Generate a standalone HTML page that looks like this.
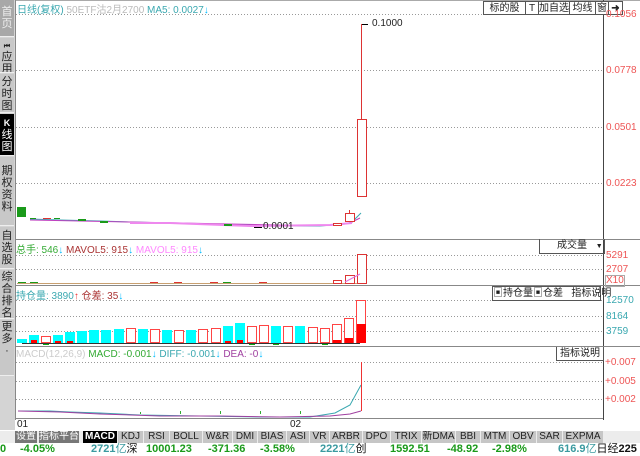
<!DOCTYPE html><html><head><meta charset="utf-8"><style>
*{margin:0;padding:0}body{width:640px;height:456px;overflow:hidden;background:#fff;font-family:"Liberation Sans","Noto Sans CJK SC",sans-serif;font-size:11px;position:relative}
.a{position:absolute;white-space:nowrap}
.side{position:absolute;left:0;top:0;width:15px;height:430px;background:#d4d4d4}
.tab{position:absolute;left:0;width:14px;background:#c8c8c8;color:#222;font-size:11px;line-height:12px;text-align:center;border-bottom:1px solid #eee;padding-top:3px;box-sizing:border-box;overflow:hidden}
.btn{position:absolute;top:1px;height:14px;border:1px solid #555;background:#fff;font-size:10px;line-height:13px;text-align:center;color:#222;white-space:nowrap;overflow:hidden;box-sizing:border-box}
.tabs{position:absolute;top:431px;left:0;height:12px;width:640px;background:#ececec}
.tb{position:absolute;top:0;height:12px;background:#c6c6c6;font-size:10px;line-height:12px;color:#222;text-align:center;white-space:nowrap;overflow:hidden}
.st{position:absolute;top:443px;font-size:11px;line-height:13px;font-weight:bold;color:#1a9a1a;white-space:nowrap}
</style></head><body>
<div class="side">
<div class="tab" style="top:0;height:37px;background:#a8a8a8;color:#eee;padding-top:6px">首<br>页</div>
<div class="tab" style="top:38px;height:35px;padding-top:1px"><b style="font-size:7px;line-height:8px">⏮</b><br>应<br>用</div>
<div class="tab" style="top:74px;height:39px;padding-top:2px">分<br>时<br>图</div>
<div class="tab" style="top:114px;height:42px;background:#000;color:#fff;padding-top:3px"><b style="font-size:9px">K</b><br>线<br>图</div>
<div class="tab" style="top:157px;height:69px;padding-top:8px">期<br>权<br>资<br>料</div>
<div class="tab" style="top:227px;height:42px;padding-top:3px">自<br>选<br>股</div>
<div class="tab" style="top:270px;height:49px;padding-top:1px">综<br>合<br>排<br>名</div>
<div class="tab" style="top:320px;height:56px;padding-top:1px">更<br>多<br>·</div>
</div>
<svg class="a" style="left:0;top:0" width="640" height="431">
<g stroke="#999" stroke-width="1" stroke-dasharray="1,2">
<line x1="16" x2="603" y1="14.5" y2="14.5"/><line x1="16" x2="603" y1="70.5" y2="70.5"/><line x1="16" x2="603" y1="127.5" y2="127.5"/><line x1="16" x2="603" y1="183.5" y2="183.5"/>
<line x1="16" x2="603" y1="255.5" y2="255.5"/><line x1="16" x2="603" y1="269.5" y2="269.5"/>
<line x1="16" x2="603" y1="300.5" y2="300.5"/><line x1="16" x2="603" y1="316.5" y2="316.5"/><line x1="16" x2="603" y1="331.5" y2="331.5"/>
<line x1="16" x2="603" y1="362.5" y2="362.5"/><line x1="16" x2="603" y1="381.5" y2="381.5"/><line x1="16" x2="603" y1="399.5" y2="399.5"/>
</g>
<g stroke="#888" fill="none">
<line x1="15" x2="640" y1="0.5" y2="0.5" stroke="#aaa"/>
<line x1="15.5" x2="15.5" y1="0" y2="420"/><line x1="603.5" x2="603.5" y1="0" y2="420" stroke="#444"/>
<line x1="16" x2="640" y1="239.5" y2="239.5"/><line x1="16" x2="640" y1="285.5" y2="285.5"/><line x1="16" x2="640" y1="346.5" y2="346.5"/><line x1="16" x2="603" y1="418.5" y2="418.5"/>
</g>
<rect x="17" y="207" width="9" height="10" fill="#1a9a1a"/>
<g stroke-width="1">
<polyline points="30,219 60,220 100,221 130,222 170,223 210,224 250,225 280,226 320,226 345,224 352,222 361,213" stroke="#3aa8b0" fill="none"/>
<polyline points="30,220 80,221 130,222 180,223 230,224 280,225 330,225 350,223 360,218" stroke="#c040c0" fill="none"/>
<polyline points="130,223 170,223 250,226 330,225 352,223" stroke="#ee88ee" fill="none" stroke-width="2"/>
</g>
<g fill="#1a9a1a"><rect x="30" y="218" width="6" height="1"/><rect x="54" y="218" width="6" height="1"/><rect x="78" y="219" width="8" height="2"/><rect x="100" y="221" width="8" height="2"/><rect x="224" y="224" width="8" height="2"/></g>
<rect x="43" y="218" width="8" height="1" fill="#d33"/>
<line x1="361.5" y1="24" x2="361.5" y2="120" stroke="#d33"/>
<rect x="357.5" y="119.5" width="9" height="77" fill="#fff" stroke="#d33"/>
<rect x="345.5" y="213.5" width="9" height="8" fill="#fff" stroke="#d33"/>
<line x1="349.5" y1="210" x2="349.5" y2="214" stroke="#d33"/>
<rect x="333.5" y="223.5" width="8" height="2" fill="#fff" stroke="#d33"/>
<line x1="362" y1="24.5" x2="368" y2="24.5" stroke="#000"/><line x1="254" y1="227.5" x2="262" y2="227.5" stroke="#000"/>
<g fill="#1a9a1a"><rect x="18" y="282" width="8" height="2"/><rect x="30" y="282" width="8" height="2"/><rect x="54" y="283" width="8" height="1"/><rect x="66" y="283" width="8" height="1"/><rect x="150" y="283" width="8" height="1"/><rect x="162" y="283" width="8" height="1"/><rect x="223" y="282" width="8" height="2"/><rect x="271" y="283" width="8" height="1"/></g>
<g fill="#d33"><rect x="42" y="283" width="8" height="1"/><rect x="150" y="282" width="8" height="2"/><rect x="174" y="282" width="8" height="2"/><rect x="210" y="282" width="8" height="2"/><rect x="259" y="282" width="8" height="2"/><rect x="283" y="283" width="8" height="1"/></g>
<line x1="17" x2="357" y1="283.5" y2="283.5" stroke="#c8a070"/>
<rect x="333.5" y="280.5" width="8" height="3" fill="#fff" stroke="#d33"/>
<rect x="345.5" y="275.5" width="9" height="8" fill="#fff" stroke="#d33"/>
<rect x="357.5" y="254.5" width="9" height="29" fill="#fff" stroke="#d33"/>
<polyline points="345,282 360,274" stroke="#e070e0" fill="none"/>
<g fill="#00ffff">
<rect x="17" y="339" width="10" height="4"/><rect x="29" y="335" width="10" height="8"/><rect x="53" y="335" width="10" height="8"/><rect x="65" y="332" width="10" height="11"/><rect x="77" y="331" width="10" height="12"/><rect x="89" y="330" width="10" height="13"/><rect x="101" y="330" width="10" height="13"/><rect x="114" y="329" width="10" height="14"/><rect x="138" y="329" width="10" height="14"/><rect x="162" y="330" width="10" height="13"/><rect x="186" y="330" width="10" height="13"/><rect x="223" y="326" width="10" height="17"/><rect x="235" y="323" width="10" height="20"/><rect x="271" y="326" width="10" height="17"/><rect x="295" y="326" width="10" height="17"/>
</g>
<g fill="#fff" stroke="#f44">
<rect x="41.5" y="336.5" width="9" height="6"/><rect x="126.5" y="328.5" width="9" height="14"/><rect x="150.5" y="329.5" width="9" height="13"/><rect x="174.5" y="330.5" width="9" height="12"/><rect x="198.5" y="329.5" width="9" height="13"/><rect x="211.5" y="328.5" width="9" height="14"/><rect x="247.5" y="326.5" width="9" height="16"/><rect x="259.5" y="325.5" width="9" height="17"/><rect x="283.5" y="326.5" width="9" height="16"/><rect x="308.5" y="327.5" width="9" height="15"/><rect x="320.5" y="328.5" width="9" height="14"/><rect x="332.5" y="324.5" width="9" height="18"/><rect x="344.5" y="318.5" width="9" height="24"/><rect x="356.5" y="300.5" width="9" height="42"/>
</g>
<g fill="#f00"><rect x="31" y="340" width="6" height="3"/><rect x="55" y="341" width="6" height="2"/><rect x="67" y="341" width="6" height="2"/><rect x="225" y="341" width="6" height="2"/><rect x="237" y="340" width="6" height="3"/><rect x="333" y="340" width="8" height="3"/><rect x="345" y="338" width="8" height="5"/><rect x="357" y="324" width="9" height="19"/></g>
<g fill="#1a1"><rect x="43" y="343" width="6" height="2"/><rect x="249" y="343" width="6" height="2"/><rect x="273" y="343" width="6" height="2"/><rect x="322" y="343" width="6" height="2"/></g>
<line x1="22" x2="360" y1="343.5" y2="343.5" stroke="#333"/>
<polyline points="18,411 50,411 70,412 100,413 140,415 200,416 260,417 310,417 335,413 350,405 361,385" stroke="#3aa8b0" fill="none"/>
<polyline points="18,411 60,412 100,414 160,416 220,416 280,417 330,416 350,414 361,411" stroke="#a040a0" fill="none"/>
<line x1="361.5" y1="362" x2="361.5" y2="411" stroke="#e33"/>
<g stroke="#3a3" stroke-width="1"><line x1="140.5" y1="412" x2="140.5" y2="414"/><line x1="180.5" y1="411" x2="180.5" y2="414"/><line x1="220.5" y1="411" x2="220.5" y2="414"/><line x1="260.5" y1="411" x2="260.5" y2="414"/><line x1="300.5" y1="411" x2="300.5" y2="414"/></g>
</svg>
<div class="a" style="left:17px;top:1px;font-size:10px;color:#3aa8b0">日线(复权) <span style="color:#bbb">50ETF沽2月2700</span> MA5: 0.0027<span style="color:#0bf">↓</span></div>
<div class="btn" style="left:483px;width:43px">标的股</div>
<div class="btn" style="left:525px;width:14px">T</div>
<div class="btn" style="left:538px;width:32px">加自选</div>
<div class="btn" style="left:569px;width:27px">均线</div>
<div class="btn" style="left:595px;width:14px">窗</div>
<div class="btn" style="left:608px;width:15px;font-weight:bold">➜</div>
<div class="a" style="left:372px;top:18px;font-size:10px;color:#222">0.1000</div>
<div class="a" style="left:263px;top:221px;font-size:10px;color:#222">0.0001</div>
<div class="a" style="left:606px;top:9px;font-size:10px;color:#e55">0.1056</div>
<div class="a" style="left:606px;top:65px;font-size:10px;color:#e55">0.0778</div>
<div class="a" style="left:606px;top:122px;font-size:10px;color:#e55">0.0501</div>
<div class="a" style="left:606px;top:178px;font-size:10px;color:#e55">0.0223</div>
<div class="a" style="left:16px;top:241px;font-size:10px;color:#3a3">总手: 546<span style="color:#0bf">↓</span> <span style="color:#a33">MAVOL5: 915</span><span style="color:#0bf">↓</span> <span style="color:#f8f">MAVOL5: 915</span><span style="color:#0bf">↓</span></div>
<div class="a" style="left:539px;top:239px;width:64px;height:14px;border:1px solid #555;border-top:0;font-size:10px;line-height:14px;color:#222;text-indent:17px">成交量 <span style="font-size:7px;margin-left:6px">▼</span></div>
<div class="a" style="left:606px;top:250px;font-size:10px;color:#e55">5291</div>
<div class="a" style="left:606px;top:264px;font-size:10px;color:#e55">2707</div>
<div class="a" style="left:605px;top:275px;font-size:10px;color:#e55;border:1px solid #aaa;line-height:10px">X10</div>
<div class="a" style="left:16px;top:287px;font-size:10px;color:#3aa8b0">持仓量: 3890<span style="color:#e33">↑</span> <span style="color:#a33">仓差: 35</span><span style="color:#0bf">↓</span></div>
<div class="a" style="left:492px;top:286px;width:107px;height:13px;border:1px solid #555;font-size:10px;line-height:13px;color:#222">▣持仓量▣仓差&nbsp;&nbsp;&nbsp;指标说明</div>
<div class="a" style="left:606px;top:295px;font-size:10px;color:#3aa8b0">12570</div>
<div class="a" style="left:606px;top:311px;font-size:10px;color:#3aa8b0">8164</div>
<div class="a" style="left:606px;top:326px;font-size:10px;color:#3aa8b0">3759</div>
<div class="a" style="left:16px;top:349px;font-size:10px;color:#ccc">MACD(12,26,9) <span style="color:#3a3">MACD: -0.001</span><span style="color:#0bf">↓</span> <span style="color:#3aa8b0">DIFF: -0.001</span><span style="color:#0bf">↓</span> <span style="color:#a040a0">DEA: -0</span><span style="color:#0bf">↓</span></div>
<div class="a" style="left:556px;top:347px;width:46px;height:13px;border:1px solid #555;border-top:0;font-size:10px;line-height:13px;text-align:center;color:#222">指标说明</div>
<div class="a" style="left:605px;top:357px;font-size:10px;color:#e55">+0.007</div>
<div class="a" style="left:605px;top:376px;font-size:10px;color:#e55">+0.005</div>
<div class="a" style="left:605px;top:394px;font-size:10px;color:#e55">+0.002</div>
<div class="a" style="left:17px;top:419px;font-size:10px;color:#222">01</div>
<div class="a" style="left:290px;top:419px;font-size:10px;color:#222">02</div>
<div class="tabs">
<div class="tb" style="left:15px;width:22px;background:#777;color:#fff">设置</div>
<div class="tb" style="left:39px;width:40px;background:#777;color:#fff">指标平台</div>
<div class="tb" style="left:83px;width:34px;background:#000;color:#fff;font-weight:bold">MACD</div>
<div class="tb" style="left:118px;width:25px">KDJ</div>
<div class="tb" style="left:144px;width:25px">RSI</div>
<div class="tb" style="left:170px;width:32px">BOLL</div>
<div class="tb" style="left:203px;width:29px">W&amp;R</div>
<div class="tb" style="left:233px;width:24px">DMI</div>
<div class="tb" style="left:258px;width:28px">BIAS</div>
<div class="tb" style="left:287px;width:22px">ASI</div>
<div class="tb" style="left:310px;width:19px">VR</div>
<div class="tb" style="left:330px;width:32px">ARBR</div>
<div class="tb" style="left:363px;width:27px">DPO</div>
<div class="tb" style="left:391px;width:30px">TRIX</div>
<div class="tb" style="left:422px;width:33px">新DMA</div>
<div class="tb" style="left:456px;width:24px">BBI</div>
<div class="tb" style="left:481px;width:28px">MTM</div>
<div class="tb" style="left:510px;width:26px">OBV</div>
<div class="tb" style="left:537px;width:25px">SAR</div>
<div class="tb" style="left:563px;width:40px">EXPMA</div>
</div>
<div class="st" style="left:0">0</div>
<div class="st" style="left:20px">-4.05%</div>
<div class="st" style="left:91px;color:#3a9aa0">2721<span style="font-weight:normal">亿</span><span style="color:#111;font-weight:normal">深</span></div>
<div class="st" style="left:146px">10001.23</div>
<div class="st" style="left:208px">-371.36</div>
<div class="st" style="left:260px">-3.58%</div>
<div class="st" style="left:320px;color:#3a9aa0">2221<span style="font-weight:normal">亿</span><span style="color:#111;font-weight:normal">创</span></div>
<div class="st" style="left:390px">1592.51</div>
<div class="st" style="left:447px">-48.92</div>
<div class="st" style="left:492px">-2.98%</div>
<div class="st" style="left:558px;color:#3a9aa0">616.9<span style="font-weight:normal">亿</span><span style="color:#111;font-weight:normal">日经</span><span style="color:#111">225</span></div>
</body></html>
